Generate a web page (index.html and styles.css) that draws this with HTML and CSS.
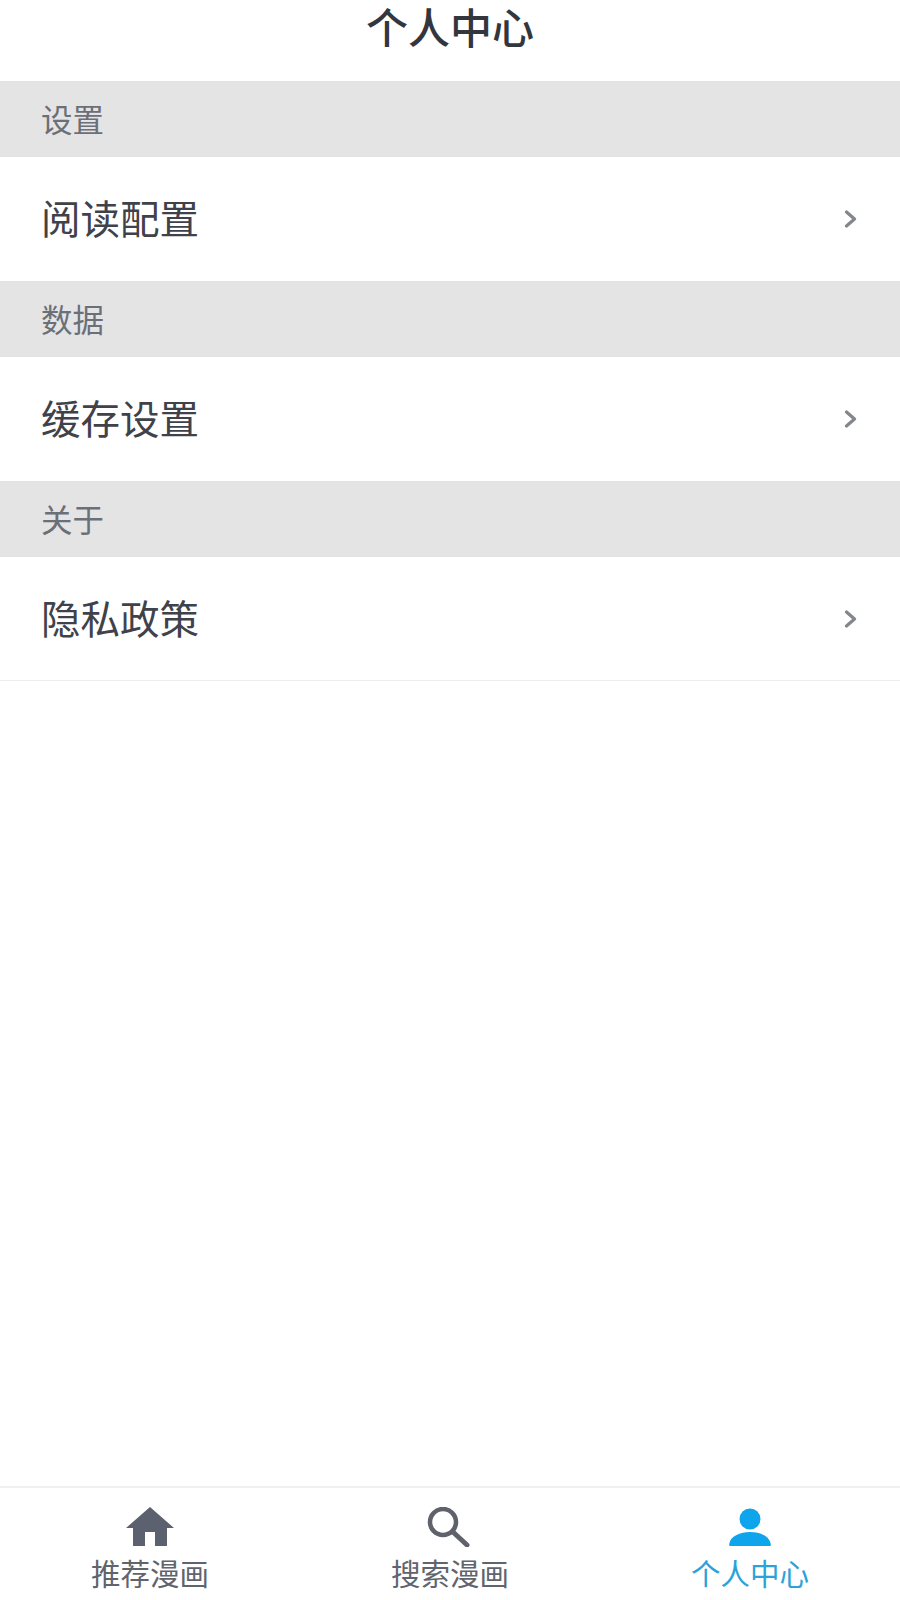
FILE: index.html
```html
<!DOCTYPE html>
<html lang="zh-CN">
<head>
<meta charset="utf-8">
<title>个人中心</title>
<link rel="stylesheet" href="styles.css">
</head>
<body>
<div class="app">
  <header class="title">个人中心</header>
  <main class="content">
    <section>
      <div class="sec">设置</div>
      <div class="row"><span>阅读配置</span><svg class="chev" viewBox="0 0 14 18"><path d="M2.500 2 10.500 9l-8 7"/></svg></div>
    </section>
    <section>
      <div class="sec">数据</div>
      <div class="row"><span>缓存设置</span><svg class="chev" viewBox="0 0 14 18"><path d="M2.500 2 10.500 9l-8 7"/></svg></div>
    </section>
    <section>
      <div class="sec">关于</div>
      <div class="row"><span>隐私政策</span><svg class="chev" viewBox="0 0 14 18"><path d="M2.500 2 10.500 9l-8 7"/></svg></div>
    </section>
  </main>
  <nav class="tabs">
    <div class="tab">
      <svg class="ico" viewBox="0 0 50 40"><path fill="#5b616e" d="M25 0 49 21H42V39H30V25H20V39H8V21H1Z"/></svg>
      <span>推荐漫画</span>
    </div>
    <div class="tab">
      <svg class="ico" viewBox="0 0 50 40"><circle cx="18" cy="15" r="13" fill="none" stroke="#5f626b" stroke-width="4.500"/><path d="M28 25 42 38" stroke="#5f626b" stroke-width="5" stroke-linecap="round"/></svg>
      <span>搜索漫画</span>
    </div>
    <div class="tab on">
      <svg class="ico" viewBox="0 0 50 40"><circle cx="25" cy="12" r="10.500" fill="#0ea5ec"/><path fill="#0ea5ec" d="M5 39C4 39 4 38 4.500 36 6 29 15 25 25 25S44 29 45.500 36C46 38 46 39 45 39Z"/></svg>
      <span>个人中心</span>
    </div>
  </nav>
</div>
</body>
</html>
```
FILE: styles.css
```css
html, body { margin: 0; padding: 0; background: #fff; }
body { font-family: "Noto Sans CJK SC", "Noto Sans", sans-serif; color: #3f424a; }
.app { width: 900px; height: 1600px; display: flex; flex-direction: column; overflow: hidden; }
.title { height: 81px; box-sizing: border-box; font-family: "Liberation Sans", "Noto Sans CJK SC", sans-serif; font-size: 42px; line-height: 60px; font-weight: 500; text-align: center; color: #33363d; }
.content { flex: 1; }
.sec { height: 76px; box-sizing: border-box; padding-left: 41px; background: #e4e4e5; color: #6b6f78; font-size: 31.500px; line-height: 74px; }
.row { height: 124px; box-sizing: border-box; padding: 0 42px 4px 41px; display: flex; align-items: center; justify-content: space-between; font-size: 39.500px; line-height: 50px; }
section:last-child .row { border-bottom: 1px solid #eeeeef; }
.chev { width: 14px; height: 18px; fill: none; stroke: #83868d; stroke-width: 3.200; stroke-linecap: round; stroke-linejoin: round; margin: 4px 0 0; }
.tabs { height: 114px; box-sizing: border-box; border-top: 2px solid #f0f0f1; display: grid; grid-template-columns: repeat(3, 1fr); }
.tab { display: flex; flex-direction: column; align-items: center; padding-top: 19px; font-size: 29.500px; line-height: 40px; color: #60646c; }
.tab.on { color: #2ba3d8; }
.ico { width: 50px; height: 40px; margin-bottom: 5px; }
```
